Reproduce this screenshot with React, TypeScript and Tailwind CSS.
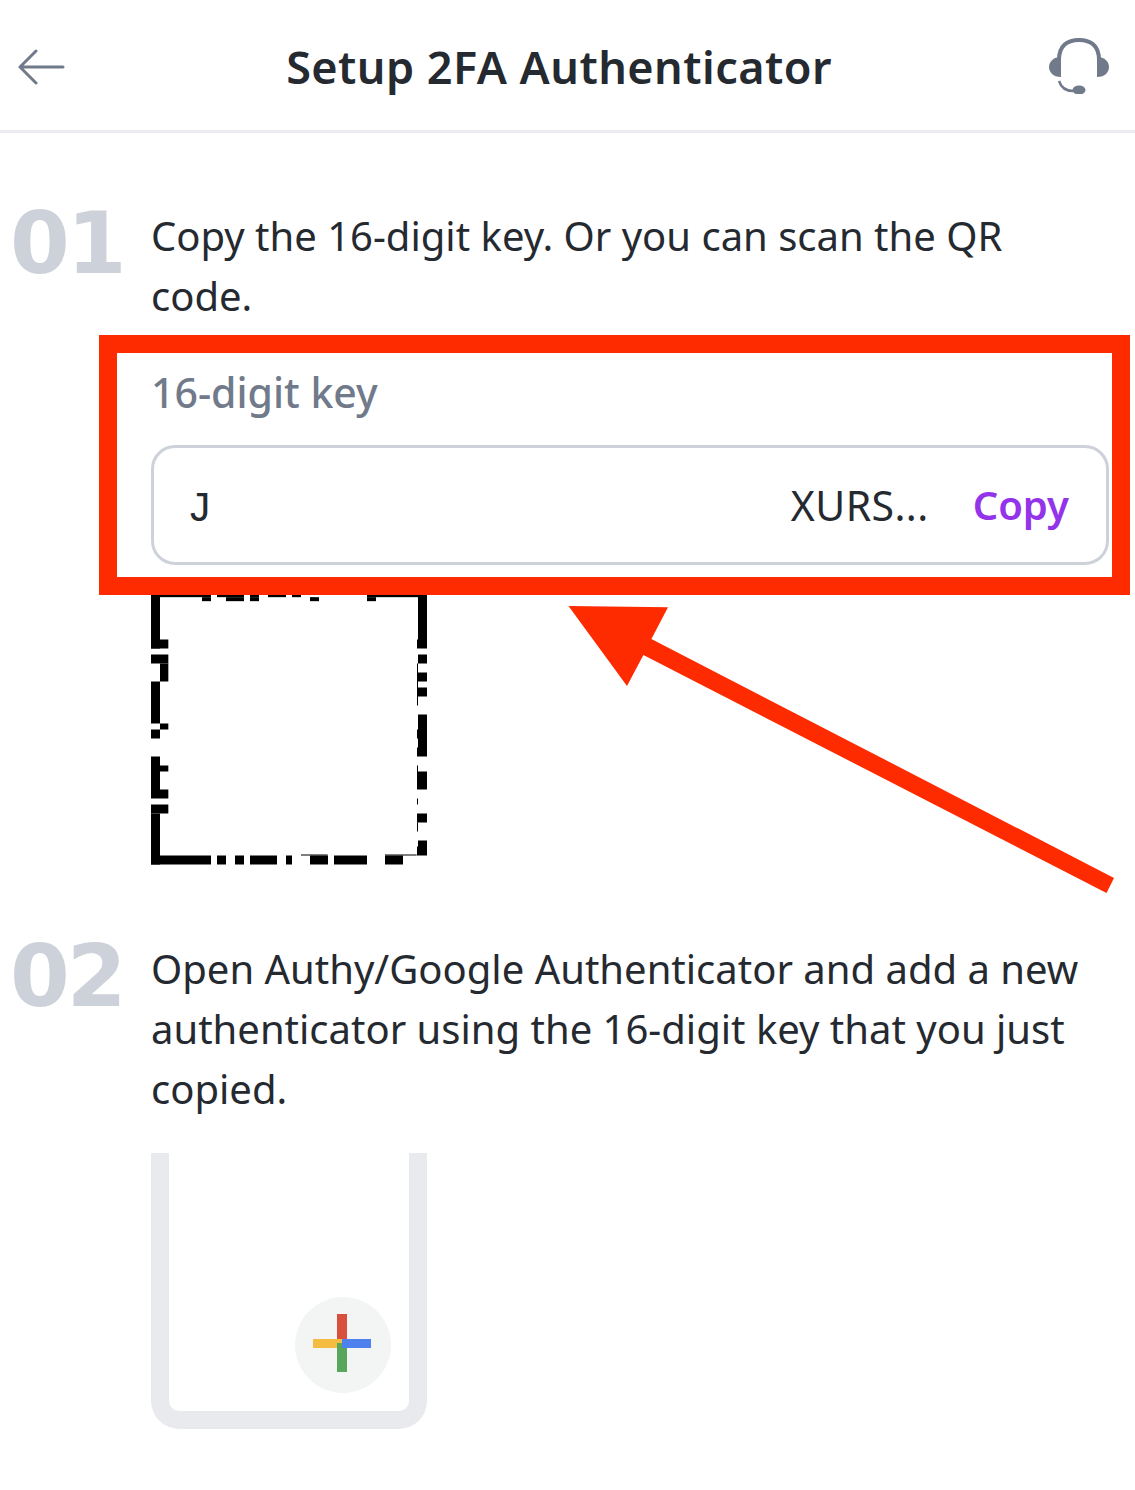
const font = { fontFamily: '"Noto Sans", sans-serif' };

const qrRects: [number, number, number, number][] = [
  // top
  [33, 44, 180, 9], [231, 44, 81, 9], [330, 44, 27, 9], [384, 44, 54, 9], [456, 44, 27, 9], [681, 44, 180, 9],
  [186, 53, 27, 12], [258, 53, 54, 12], [330, 53, 27, 12], [510, 53, 27, 12], [681, 53, 27, 12],
  // left
  [33, 44, 27, 163], [33, 180, 52, 27], [33, 225, 52, 27], [60, 252, 25, 54], [33, 306, 27, 126],
  [60, 432, 25, 18], [33, 450, 27, 27], [33, 531, 27, 126], [60, 558, 25, 18], [60, 630, 25, 27],
  [33, 675, 52, 27], [33, 702, 27, 153],
  // bottom
  [33, 828, 180, 27], [231, 828, 27, 27], [285, 828, 27, 27], [330, 828, 81, 27], [438, 828, 18, 27],
  [510, 828, 54, 27], [582, 828, 99, 27], [735, 828, 54, 27], [483, 825, 80, 3], [735, 825, 95, 3],
  // right
  [834, 44, 27, 163], [831, 180, 3, 27], [834, 225, 27, 27], [834, 279, 27, 27], [834, 324, 27, 27],
  [831, 252, 3, 126], [834, 405, 27, 126], [831, 450, 3, 27], [831, 504, 3, 27], [831, 558, 3, 20],
  [831, 576, 30, 54], [831, 657, 3, 18], [831, 702, 30, 27], [831, 729, 3, 27], [834, 783, 27, 45], [831, 801, 3, 27],
];

function Headset() {
  return (
    <svg width="62" height="58" viewBox="0 0 62 58" fill="none">
      <path d="M11 24C11 9 20 4 31 4C42 4 51 9 51 24" stroke="#707a8a" strokeWidth="4" />
      <path d="M13 21C5 21 1 26 1 31C1 36 5 41 13 41Z" fill="#707a8a" />
      <path d="M49 21C57 21 61 26 61 31C61 36 57 41 49 41Z" fill="#707a8a" />
      <path d="M11 45C13 51 18 55 25 55" stroke="#707a8a" strokeWidth="2.5" />
      <ellipse cx="31" cy="54" rx="6.5" ry="4.5" fill="#707a8a" />
    </svg>
  );
}

function Step({ num, children }: { num: string; children: React.ReactNode }) {
  return (
    <div className="flex">
      <div className="w-[151px] shrink-0 pl-[10px] mt-[7px] h-[60px] text-[86px] leading-[60px] font-bold text-[#cdd1d9] tracking-[-3px]" style={{ fontFamily: '"DejaVu Sans", sans-serif' }}>
        {num}
      </div>
      <p className="w-[960px] text-[40px] leading-[60px] text-[#252930]">{children}</p>
    </div>
  );
}

export default function App() {
  return (
    <div className="relative w-[1135px] h-[1490px] overflow-hidden bg-white" style={font}>
      <header className="relative flex h-[133px] items-center justify-between border-b-[3px] border-[#eaecef] pl-[18px] pr-[25px]">
        <svg className="mt-[3px]" width="47" height="36" viewBox="0 0 47 36" fill="none" stroke="#707a8a" strokeWidth="3" strokeLinecap="round" strokeLinejoin="round">
          <path d="M2 18H45M18 2L2 18L18 34" />
        </svg>
        <h1 className="mt-[3px] ml-[5px] text-[45px] font-semibold tracking-[0.45px] text-[#252930] whitespace-nowrap">Setup 2FA Authenticator</h1>
        <Headset />
      </header>

      <main className="pt-[73px]">
        <Step num="01">
          Copy the 16-digit key. Or you can scan the QR code.
        </Step>

        <div className="ml-[151px] mr-[26px]">
          <div className="mt-[36px] text-[41px] font-medium leading-[60px] text-[#707a8a]">16-digit key</div>
          <div className="mt-[23px] flex h-[120px] items-center rounded-[24px] border-[3px] border-[#cdd1d9] pl-[33px] pr-[37px] text-[41px] text-[#252930]">
            <span className="mt-[11px] text-[42px]" style={{ fontFamily: '"Liberation Mono", monospace' }}>J</span>
            <span className="ml-auto mt-[2px] tracking-[0.4px]">XURS...</span>
            <span className="ml-[44px] text-[40px] font-semibold text-[#9333ea]">Copy</span>
          </div>
          <svg className="mt-[29px]" width="276" height="271" viewBox="33 44 828 812" fill="#000">
            {qrRects.map(([x, y, w, h], i) => (
              <rect key={i} x={x} y={y} width={w} height={h} />
            ))}
          </svg>
        </div>

        <div className="mt-[74px]">
          <Step num="02">
            Open Authy/Google Authenticator and add a new authenticator using the 16-digit key that you just copied.
          </Step>
        </div>

        <div className="ml-[151px] mt-[34px] relative h-[276px] w-[276px] rounded-b-[28px] border-x-[18px] border-b-[18px] border-[#e9eaee] blur-[0.5px]">
          <div className="absolute left-[126px] top-[144px] flex h-[96px] w-[96px] items-center justify-center rounded-full bg-[#f3f4f4]">
            <svg className="-translate-x-px -translate-y-0.5" width="58" height="58" viewBox="0 0 58 58">
              <rect x="24" y="0" width="10" height="29" fill="#d94f3d" />
              <rect x="0" y="25" width="29" height="9" fill="#f4bd41" />
              <rect x="24" y="29" width="10" height="29" fill="#58a55c" />
              <rect x="29" y="25" width="29" height="9" fill="#4f81ee" />
            </svg>
          </div>
        </div>
      </main>

      {/* red annotation drawn over the screenshot */}
      <div className="absolute left-[99px] top-[335px] h-[260px] w-[1031px] border-[18px] border-[#ff2b00]" />
      <svg className="absolute left-0 top-0" width="1135" height="1490" viewBox="0 0 1135 1490">
        <polygon points="568.5,606 668,607.3 651.4,639 1114,878 1106.5,893 643.4,655 627,686" fill="#ff2b00" />
      </svg>
    </div>
  );
}
